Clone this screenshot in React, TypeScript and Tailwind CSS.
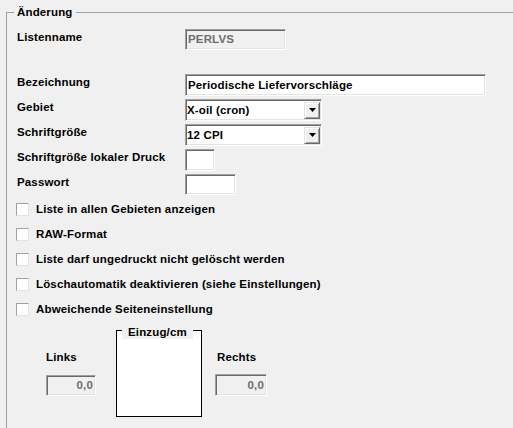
import type { ReactNode } from 'react';

const sunken =
  'border border-t-[#a0a0a0] border-l-[#a0a0a0] border-r-white border-b-white shadow-[inset_1px_1px_0_#696969,inset_-1px_-1px_0_#e3e3e3]';

function Row({ label, h, children }: { label: string; h: string; children: ReactNode }) {
  return (
    <div className={`flex items-start ${h}`}>
      <div className="w-[168px] pt-[2px] leading-[13px]">{label}</div>
      {children}
    </div>
  );
}

function Edit({ w, h, value, disabled, right }: { w: string; h: string; value?: string; disabled?: boolean; right?: boolean }) {
  return (
    <div
      className={`${sunken} ${w} ${h} ${disabled ? 'bg-[#f0f0f0] text-[#6d6d6d]' : 'bg-white text-black'} flex items-center px-[2px] leading-[13px] ${right ? 'justify-end' : ''}`}
    >
      {value}
    </div>
  );
}

function Combo({ value }: { value: string }) {
  return (
    <div className={`${sunken} w-[137px] h-[22px] bg-white flex items-center pl-[1px] pr-[1px] leading-[13px]`}>
      <span className="flex-1">{value}</span>
      <div className="w-[16px] h-[17px] bg-[#f0f0f0] border border-t-[#e3e3e3] border-l-[#e3e3e3] border-r-[#696969] border-b-[#696969] shadow-[inset_1px_1px_0_#fff,inset_-1px_-1px_0_#a0a0a0] flex items-center justify-center">
        <svg width="7" height="4" viewBox="0 0 7 4">
          <path d="M0 0h7L3.5 4z" fill="#000" />
        </svg>
      </div>
    </div>
  );
}

function Check({ label }: { label: string }) {
  return (
    <div className="flex items-start h-[25px] pl-[9px]">
      <div className="w-[13px] h-[13px] shrink-0 bg-white border border-t-[#a0a0a0] border-l-[#a0a0a0] border-r-[#e3e3e3] border-b-[#e3e3e3]" />
      <span className="ml-[7px] leading-[13px]">{label}</span>
    </div>
  );
}

export default function App() {
  return (
    <div className="w-[513px] h-[428px] overflow-hidden bg-[#f0f0f0] font-['Liberation_Sans',Arial,sans-serif] text-[11.5px] tracking-[0.15px] font-bold text-black">
      <fieldset className="mt-[6px] ml-[6px] w-[520px] h-[440px] border-l border-t border-[#a0a0a0]">
        <legend className="ml-[7px] px-[3px] leading-[13px]">Änderung</legend>
        <div className="pl-[10px] pt-[10px]">
          <Row label="Listenname" h="h-[45px]">
            <Edit w="w-[101px]" h="h-[21px]" value="PERLVS" disabled />
          </Row>
          <Row label="Bezeichnung" h="h-[25px]">
            <Edit w="w-[301px]" h="h-[22px]" value="Periodische Liefervorschläge" />
          </Row>
          <Row label="Gebiet" h="h-[25px]">
            <Combo value="X-oil (cron)" />
          </Row>
          <Row label="Schriftgröße" h="h-[25px]">
            <Combo value="12 CPI" />
          </Row>
          <Row label="Schriftgröße lokaler Druck" h="h-[25px]">
            <Edit w="w-[30px]" h="h-[22px]" />
          </Row>
          <Row label="Passwort" h="h-[29px]">
            <Edit w="w-[51px]" h="h-[21px]" />
          </Row>
        </div>
        <div>
          <Check label="Liste in allen Gebieten anzeigen" />
          <Check label="RAW-Format" />
          <Check label="Liste darf ungedruckt nicht gelöscht werden" />
          <Check label="Löschautomatik deaktivieren (siehe Einstellungen)" />
          <Check label="Abweichende Seiteneinstellung" />
        </div>
        <div className="flex items-start pl-[39px]">
          <div className="w-[50px] pt-[23px]">
            <div className="leading-[13px]">Links</div>
            <div className="mt-[11px]">
              <Edit w="w-[50px]" h="h-[21px]" value="0,0" disabled right />
            </div>
          </div>
          <div className="relative ml-[20px] mt-[2px] w-[86px] h-[87px] border border-black bg-white">
            <span className="absolute left-[5px] top-[-5px] px-[6px] bg-[#f0f0f0] leading-[13px]">Einzug/cm</span>
          </div>
          <div className="ml-[13px] pt-[23px]">
            <div className="ml-[2px] leading-[13px]">Rechts</div>
            <div className="mt-[10px]">
              <Edit w="w-[52px]" h="h-[22px]" value="0,0" disabled right />
            </div>
          </div>
        </div>
      </fieldset>
    </div>
  );
}
